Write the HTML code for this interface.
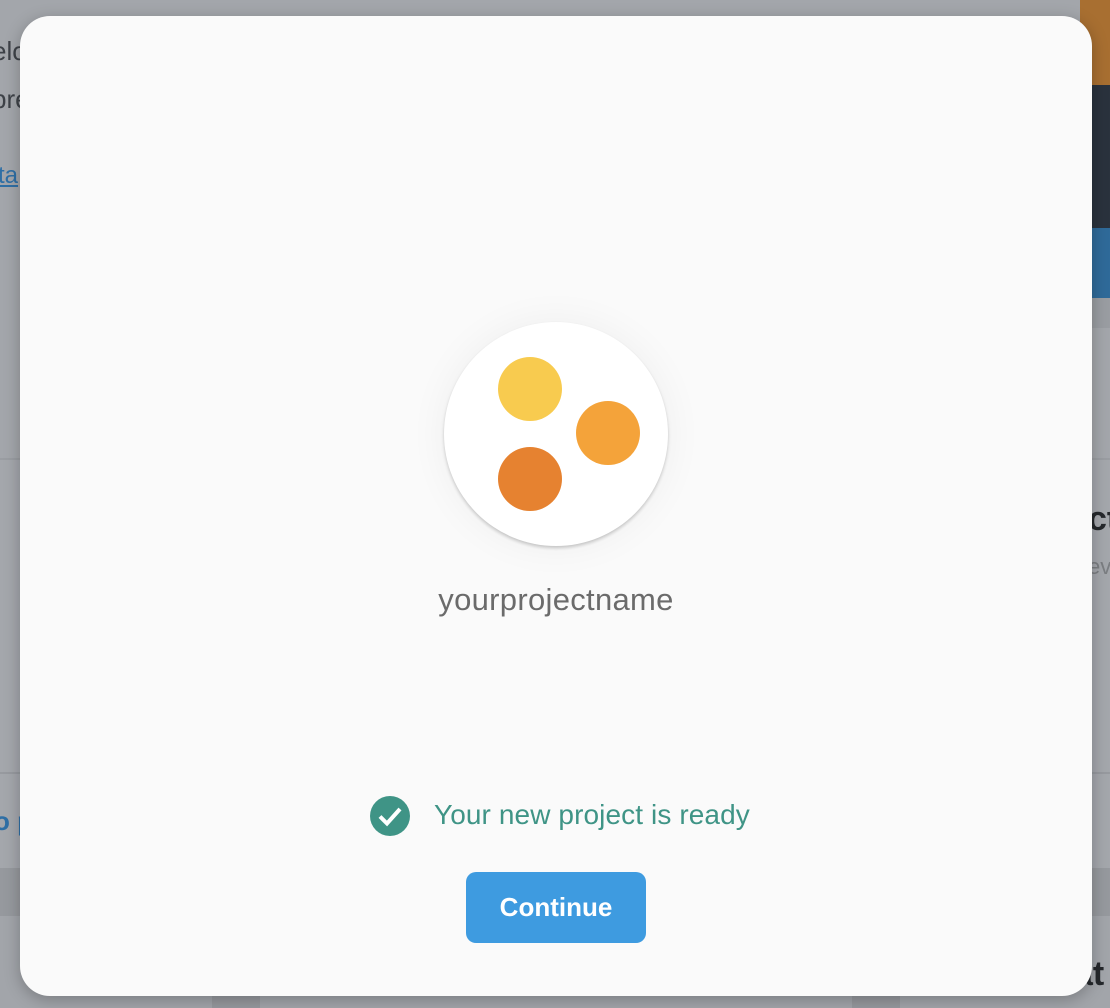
<!DOCTYPE html>
<html><head><meta charset="utf-8"><style>
html,body{margin:0;padding:0;width:1110px;height:1008px;overflow:hidden;background:#a4a7ac;font-family:"Liberation Sans",sans-serif;position:relative}
.abs{position:absolute}
.dlg{position:absolute;left:20px;top:16px;width:1072px;height:980px;background:#fafafa;border-radius:30px;box-shadow:0 4px 16px rgba(0,0,0,.25)}
</style></head><body>
<div class="abs" style="left:0;top:0;width:1110px;height:458px;background:#a3a6ab"></div>
<div class="abs" style="left:0;top:458px;width:1110px;height:2px;background:#9a9da2"></div>
<div class="abs" style="left:0;top:772px;width:1110px;height:2px;background:#979a9f"></div>
<div class="abs" style="left:0;top:868px;width:1110px;height:48px;background:#96999e"></div>
<div class="abs" style="left:0;top:916px;width:1110px;height:92px;background:#a2a5aa"></div>
<div class="abs" style="left:1080px;top:0;width:30px;height:100px;background:#a86f31"></div>
<div class="abs" style="left:1090px;top:85px;width:20px;height:145px;background:#2a323d"></div>
<div class="abs" style="left:1090px;top:228px;width:20px;height:70px;background:#2f6a99"></div>
<div class="abs" style="left:1090px;top:298px;width:20px;height:30px;background:#9a9da2"></div>
<div class="abs" style="left:-8px;top:36px;font-size:26px;color:#3e4248">elo</div>
<div class="abs" style="left:-8px;top:84px;font-size:26px;color:#3e4248">pre</div>
<div class="abs" style="left:-2px;top:162px;font-size:24px;color:#2f6fa5;text-decoration:underline">ta</div>
<div class="abs" style="left:-6px;top:806px;font-size:26px;color:#2f6fa5;font-weight:bold">o p</div>
<div class="abs" style="left:1088px;top:500px;font-size:34px;color:#25282c;font-weight:bold">ct</div>
<div class="abs" style="left:1088px;top:554px;font-size:22px;color:#7b7e82">ev</div>
<div class="abs" style="left:1074px;top:955px;font-size:34px;color:#25282c;font-weight:bold">at</div>
<div class="abs" style="left:212px;top:990px;width:48px;height:18px;background:#96999e"></div>
<div class="abs" style="left:852px;top:990px;width:48px;height:18px;background:#96999e"></div>
<div class="dlg"></div>
<div class="abs" style="left:444px;top:322px;width:224px;height:224px;border-radius:50%;background:#fff;box-shadow:0 2px 3px rgba(0,0,0,.2),0 0 40px rgba(0,0,0,.05)"></div>
<div class="abs" style="left:498px;top:357px;width:64px;height:64px;border-radius:50%;background:#f8cb4f"></div>
<div class="abs" style="left:576px;top:401px;width:64px;height:64px;border-radius:50%;background:#f4a33a"></div>
<div class="abs" style="left:498px;top:447px;width:64px;height:64px;border-radius:50%;background:#e68230"></div>
<div class="abs" style="left:0;width:1112px;top:582px;text-align:center;font-size:31px;color:#6b6b6b;letter-spacing:0.3px">yourprojectname</div>
<svg class="abs" style="left:370px;top:796px" width="40" height="40" viewBox="0 0 40 40"><circle cx="20" cy="20" r="20" fill="#3f9486"/><path d="M10 20.5 L17 27.5 L30 13" stroke="#fff" stroke-width="4" fill="none"/></svg>
<div class="abs" style="left:434px;top:799px;font-size:28px;color:#3f9486;white-space:nowrap;letter-spacing:0.1px">Your new project is ready</div>
<div class="abs" style="left:466px;top:872px;width:180px;height:71px;background:#3e9be0;border-radius:10px;color:#fff;font-size:26px;font-weight:bold;text-align:center;line-height:71px">Continue</div>
</body></html>
